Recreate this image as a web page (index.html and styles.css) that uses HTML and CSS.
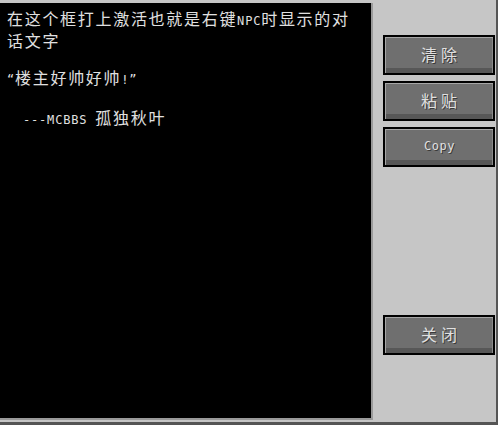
FILE: index.html
```html
<!DOCTYPE html>
<html lang="zh">
<head>
    <meta charset="UTF-8">
    <title>NPC对话编辑</title>
    <link rel="stylesheet" href="styles.css">
</head>
<body>
    <div class="window">
        <div class="editor">
            <div class="text">在这个框打上激活也就是右键<span class="latin">NPC</span>时显示的对
话文字

<span class="latin">“</span>楼主好帅好帅<span class="latin">!”</span>

<span class="latin">  ---MCBBS </span>孤独秋叶</div>
        </div>
        <div class="sidebar">
            <button class="btn">清除</button>
            <button class="btn">粘贴</button>
            <button class="btn btn-small">Copy</button>
            <button class="btn btn-close">关闭</button>
        </div>
    </div>
</body>
</html>
```

FILE: styles.css
```css
:root {
    --panel: #c6c6c6;
    --edge: #555555;
    --btn-face: #6f6f6f;
    --text: #e0e0e0;
}
html, body {
    margin: 0;
    padding: 0;
}
body {
    background-color: var(--panel);
    font-family: "Noto Sans CJK SC", "DejaVu Sans", sans-serif;
    color: var(--text);
}
.window {
    display: flex;
    width: 498px;
    height: 425px;
    box-sizing: border-box;
    border-right: 2px solid var(--edge);
    border-bottom: 3px solid var(--edge);
}
.editor {
    width: 371px;
    height: 415px;
    margin-top: 3px;
    background-color: #000;
    border-right: 2px solid #9a9a9a;
    border-bottom: 2px solid #9a9a9a;
    flex-shrink: 0;
}
.text {
    white-space: pre;
    font-size: 16px;
    line-height: 18.5px;
    letter-spacing: 1.7px;
    padding: 6px 0 0 7px;
}
.latin {
    font-family: "DejaVu Sans Mono", monospace;
    font-size: 12px;
    letter-spacing: 0.8px;
}
.sidebar {
    display: flex;
    flex-direction: column;
    gap: 6px;
    padding-top: 35px;
    margin-left: 10px;
}
.btn {
    width: 112px;
    height: 40px;
    box-sizing: border-box;
    border: 2px solid #000;
    background-color: var(--btn-face);
    box-shadow: inset 1px 1px 0 #a6a6a6, inset -1px 0 0 #8a8a8a, inset 0 -5px 0 #575757;
    color: var(--text);
    font-family: inherit;
    font-size: 16px;
    letter-spacing: 4px;
    text-shadow: 1px 1px 0 #3a3a3a;
    padding: 0 0 3px 4px;
    cursor: pointer;
}
.btn-small {
    font-family: "DejaVu Sans Mono", monospace;
    font-size: 12px;
    letter-spacing: 0.5px;
    padding-left: 1px;
}
.btn-close {
    margin-top: 142px;
}
```
